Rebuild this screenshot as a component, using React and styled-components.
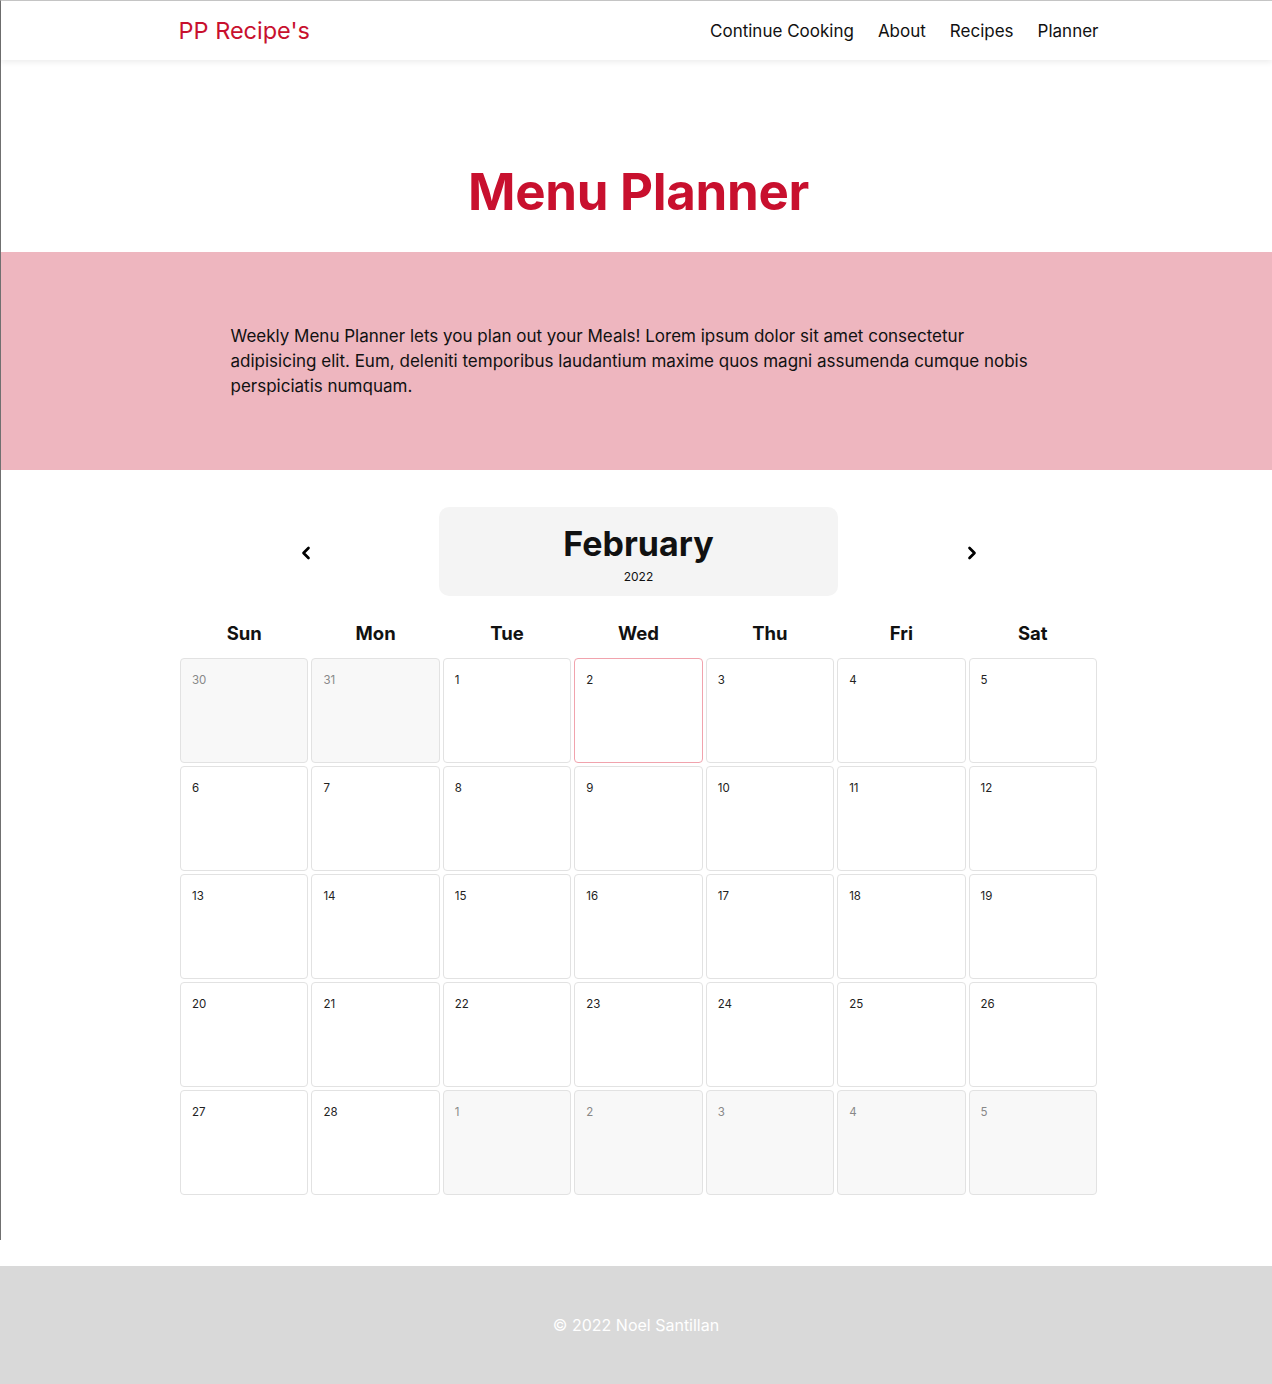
import React from "react";
import styled, { createGlobalStyle } from "styled-components";
import { ChevronLeft, ChevronRight } from "lucide-react";

const GlobalStyle = createGlobalStyle`
  * {
    box-sizing: border-box;
  }
  body {
    margin: 0;
    font-family: Inter, "Noto Sans", sans-serif;
    color: #111;
    background: #fff;
  }
`;

const days = ["Sun", "Mon", "Tue", "Wed", "Thu", "Fri", "Sat"];

// feb 2022, with the overflow days of jan and march greyed out
const cells = [
  ...[30, 31].map((n) => ({ n, other: true })),
  ...Array.from({ length: 28 }, (_, i) => ({ n: i + 1, today: i + 1 === 2 })),
  ...[1, 2, 3, 4, 5].map((n) => ({ n, other: true })),
];

const App = () => {
  return (
    <>
      <GlobalStyle />
      <Page>
        <Header>
          <Nav>
            <Logo>PP Recipe's</Logo>
            <Links>
              <NavLink>Continue Cooking</NavLink>
              <NavLink>About</NavLink>
              <NavLink>Recipes</NavLink>
              <NavLink>Planner</NavLink>
            </Links>
          </Nav>
        </Header>

        <TitleSection>
          <Title>Menu Planner</Title>
        </TitleSection>

        <Intro>
          <p>
            Weekly Menu Planner lets you plan out your Meals! Lorem ipsum dolor
            sit amet consectetur adipisicing elit. Eum, deleniti temporibus
            laudantium maxime quos magni assumenda cumque nobis perspiciatis
            numquam.
          </p>
        </Intro>

        <Calendar>
          <MonthBar>
            <Arrow $side="left">
              <ChevronLeft size={20} strokeWidth={3.2} />
            </Arrow>
            <MonthBox>
              <span className="month">February</span>
              <span className="year">2022</span>
            </MonthBox>
            <Arrow $side="right">
              <ChevronRight size={20} strokeWidth={3.2} />
            </Arrow>
          </MonthBar>

          <DayNames>
            {days.map((d) => (
              <span key={d}>{d}</span>
            ))}
          </DayNames>

          <Grid>
            {cells.map((c, key) => (
              <Cell key={key} $other={c.other} $today={c.today}>
                <span>{c.n}</span>
              </Cell>
            ))}
          </Grid>
        </Calendar>
      </Page>
      <Footer>© 2022 Noel Santillan</Footer>
    </>
  );
};
export default App;

const Page = styled.div`
  border-top: 1px solid #c8c8c8;
  border-left: 1px solid #707070;
  padding-left: 4px;
  padding-bottom: 45px;
`;

const Header = styled.header`
  height: 59px;
  margin-left: -4px;
  padding-left: 4px;
  background: #fff;
  box-shadow: 0 2px 6px rgba(0, 0, 0, 0.08);
`;

const Nav = styled.nav`
  width: 920px;
  height: 100%;
  margin: 0 auto;
  display: flex;
  align-items: center;
  justify-content: space-between;
`;

const Logo = styled.span`
  color: #c8102e;
  font-size: 23.5px;
  font-weight: 400;
`;

const Links = styled.div`
  display: flex;
  gap: 24px;
`;

const NavLink = styled.span`
  font-size: 17px;
  color: #111;
`;

const TitleSection = styled.section`
  height: 192px;
  display: flex;
  align-items: flex-end;
  justify-content: center;
  padding-bottom: 30px;
`;

const Title = styled.h1`
  margin: 0;
  color: #c8102e;
  font-size: 51px;
  font-weight: 700;
  letter-spacing: -0.3px;
`;

const Intro = styled.section`
  background: #eeb6bf;
  height: 218px;
  margin-left: -4px;
  padding-left: 4px;
  padding-top: 72px;
  p {
    width: 816px;
    margin: 0 auto;
    font-size: 17px;
    line-height: 25px;
    color: #111;
  }
`;

const Calendar = styled.section`
  width: 917px;
  margin: 37px auto 0;
`;

const MonthBar = styled.div`
  display: grid;
  grid-template-columns: 1fr 399px 1fr;
  align-items: center;
`;

const Arrow = styled.div`
  display: flex;
  justify-content: center;
  color: #000;
  padding-top: 2px;
  ${(p) => (p.$side === "left" ? "padding-right: 8px;" : "padding-left: 8px;")}
`;

const MonthBox = styled.div`
  height: 89px;
  background: #f4f4f4;
  border-radius: 10px;
  display: flex;
  flex-direction: column;
  align-items: center;
  justify-content: center;
  .month {
    font-size: 34px;
    font-weight: 700;
    line-height: 40px;
    margin-top: 4px;
  }
  .year {
    font-size: 12px;
    margin-top: 5px;
  }
`;

const DayNames = styled.div`
  display: grid;
  grid-template-columns: repeat(7, 1fr);
  gap: 3px;
  margin: 24px 0 12px;
  span {
    text-align: center;
    font-size: 18.5px;
    font-weight: 700;
    line-height: 26px;
  }
`;

const Grid = styled.div`
  display: grid;
  grid-template-columns: repeat(7, 1fr);
  grid-auto-rows: 105px;
  gap: 3px;
`;

const Cell = styled.div`
  border: 1px solid ${(p) => (p.$today ? "#f1a3ad" : "#e2e2e2")};
  border-radius: 4px;
  background: ${(p) => (p.$other ? "#f8f8f8" : "#fff")};
  padding: 9px 11px;
  span {
    font-size: 11.5px;
    color: ${(p) => (p.$other ? "#888" : "#222")};
  }
`;

const Footer = styled.footer`
  margin-top: 26px;
  height: 118px;
  background: #d9d9d9;
  color: #fff;
  font-size: 16px;
  display: flex;
  align-items: center;
  justify-content: center;
`;
